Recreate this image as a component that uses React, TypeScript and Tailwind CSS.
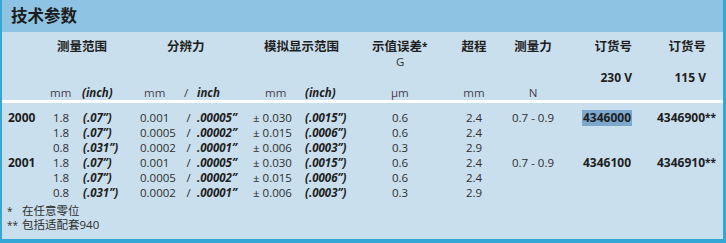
import React from "react";

const cols =
  "grid grid-cols-[46px_32px_57px_45px_12px_56px_52px_70px_68px_68px_50px_74px_91px]";

type Row = {
  mm: string;
  inch: string;
  res: string;
  resIn: string;
  ana: string;
  anaIn: string;
  err: string;
  travel: string;
};

const groups: {
  id: string;
  force: string;
  o230: string;
  o115: string;
  mark?: boolean;
  rows: Row[];
}[] = [
  {
    id: "2000",
    force: "0.7 - 0.9",
    o230: "4346000",
    o115: "4346900",
    mark: true,
    rows: [
      { mm: "1.8", inch: "(.07”)", res: "0.001", resIn: ".00005”", ana: "± 0.030", anaIn: "(.0015”)", err: "0.6", travel: "2.4" },
      { mm: "1.8", inch: "(.07”)", res: "0.0005", resIn: ".00002”", ana: "± 0.015", anaIn: "(.0006”)", err: "0.6", travel: "2.4" },
      { mm: "0.8", inch: "(.031”)", res: "0.0002", resIn: ".00001”", ana: "± 0.006", anaIn: "(.0003”)", err: "0.3", travel: "2.9" },
    ],
  },
  {
    id: "2001",
    force: "0.7 - 0.9",
    o230: "4346100",
    o115: "4346910",
    rows: [
      { mm: "1.8", inch: "(.07”)", res: "0.001", resIn: ".00005”", ana: "± 0.030", anaIn: "(.0015”)", err: "0.6", travel: "2.4" },
      { mm: "1.8", inch: "(.07”)", res: "0.0005", resIn: ".00002”", ana: "± 0.015", anaIn: "(.0006”)", err: "0.6", travel: "2.4" },
      { mm: "0.8", inch: "(.031”)", res: "0.0002", resIn: ".00001”", ana: "± 0.006", anaIn: "(.0003”)", err: "0.3", travel: "2.9" },
    ],
  },
];

const bi = "font-bold italic text-[#1e1e1e]";

export default function App() {
  return (
    <div className="w-[726px] h-[243px] overflow-hidden bg-[#c9dfed] border-l-2 border-r-[3px] border-b-4 border-[#35a7d4] font-['Open_Sans','Noto_Sans_CJK_SC',sans-serif] text-[#2e2e2e] flex flex-col">
      <div className="h-[32px] shrink-0 bg-[#8ec3e3] flex items-center pl-[9px]">
        <h1 className="text-[16.5px] font-bold text-[#1c1c1c] leading-none">技术参数</h1>
      </div>

      {/* headings */}
      <div className={`${cols} mt-[8px] h-[15px] items-center text-[12.5px] font-bold text-[#1e1e1e] leading-none`}>
        <div className="col-start-2 col-span-2 pl-[9px]">测量范围</div>
        <div className="col-start-4 col-span-3 pl-[30px]">分辨力</div>
        <div className="col-start-7 col-span-2 pl-[14px]">模拟显示范围</div>
        <div className="col-start-9 whitespace-nowrap">
          示值误差<span className="text-[10px] align-top leading-none">*</span>
        </div>
        <div className="text-center">超程</div>
        <div className="text-center">测量力</div>
        <div className="text-right">订货号</div>
        <div className="text-right pr-[17px]">订货号</div>
      </div>
      <div className={`${cols} mt-[1px] h-[11px] items-center text-[11.5px] leading-none text-[#333]`}>
        <div className="col-start-9 pl-[24px]">G</div>
      </div>
      <div className={`${cols} mt-[4px] h-[14px] items-center text-[12px] font-bold text-[#1e1e1e] leading-none`}>
        <div className="col-start-12 text-right">230 V</div>
        <div className="text-right pr-[17px]">115 V</div>
      </div>
      <div className={`${cols} h-[15px] items-center text-[11.5px] leading-none text-[#45404f]`}>
        <div className="col-start-2 pl-[2px]">mm</div>
        <div className={`pl-[2px] ${bi}`}>(inch)</div>
        <div className="pl-[7px]">mm</div>
        <div className="text-center pr-[4px]">/</div>
        <div className={`pl-[3px] ${bi}`}>inch</div>
        <div className="pl-[15px]">mm</div>
        <div className={`pl-[3px] ${bi}`}>(inch)</div>
        <div className="pl-[19px]">µm</div>
        <div className="text-center">mm</div>
        <div className="text-center">N</div>
      </div>

      <div className="h-[3px] bg-white shrink-0" />

      <div className="mt-[7px] flex flex-col">
        {groups.map((g) =>
          g.rows.map((r, i) => (
            <div key={g.id + i} className={`${cols} h-[15px] items-center text-[11.5px] leading-none`}>
              <div className="pl-[6px] text-[12px] font-bold text-[#1e1e1e]">{i === 0 ? g.id : ""}</div>
              <div className="pl-[5px]">{r.mm}</div>
              <div className={`pl-[3px] ${bi}`}>{r.inch}</div>
              <div className="pl-[3px]">{r.res}</div>
              <div className="text-center pl-[1px]">/</div>
              <div className={`pl-[3px] ${bi}`}>{r.resIn}</div>
              <div className="pl-[3px] whitespace-nowrap">{r.ana}</div>
              <div className={`pl-[3px] ${bi}`}>{r.anaIn}</div>
              <div className="pl-[20px]">{r.err}</div>
              <div className="text-center">{r.travel}</div>
              <div className="text-center whitespace-nowrap">{i === 0 ? g.force : ""}</div>
              <div className="flex justify-end">
                {i === 0 && (
                  <span
                    className={`h-[16px] px-[1px] flex items-center text-[12px] font-bold text-[#1e1e1e] ${
                      g.mark ? "bg-[#7ba8cc]" : ""
                    }`}
                  >
                    {g.o230}
                  </span>
                )}
              </div>
              <div className="pl-[25px] text-[12px] font-bold text-[#1e1e1e] whitespace-nowrap">
                {i === 0 ? (
                  <>
                    {g.o115}
                    <span className="text-[10px] align-top leading-none">**</span>
                  </>
                ) : (
                  ""
                )}
              </div>
            </div>
          ))
        )}
      </div>

      <div className="mt-[4px] flex flex-col text-[11.5px] text-[#2e2e2e] leading-none">
        <div className="h-[14px] flex items-center">
          <span className="w-[20px] pl-[5px] text-[10px]">*</span>
          <span>在任意零位</span>
        </div>
        <div className="h-[13px] flex items-center">
          <span className="w-[20px] pl-[5px] text-[10px]">**</span>
          <span>包括适配套940</span>
        </div>
      </div>
    </div>
  );
}
